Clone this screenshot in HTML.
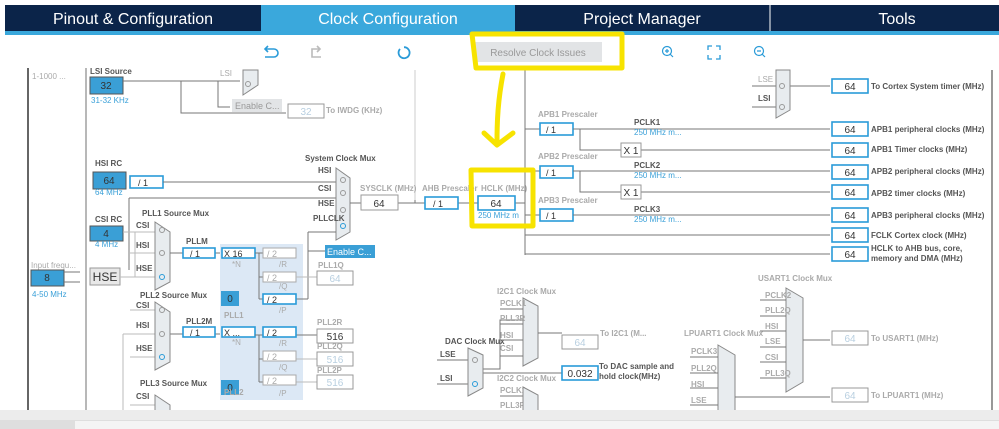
<!DOCTYPE html>
<html><head><meta charset="utf-8"><style>
html,body{margin:0;padding:0;width:999px;height:429px;overflow:hidden;background:#fff}
svg{display:block;font-family:"Liberation Sans",Arial,sans-serif}
.t{font-size:8px;fill:#555;font-weight:bold}
.g{font-size:8px;fill:#aaa}
.b{font-size:8px;fill:#3aa0d8}
.lab{font-size:8px;fill:#555;font-weight:bold}
.ln{stroke:#777;stroke-width:1;fill:none}
.lg{stroke:#bbb;stroke-width:1;fill:none}
.sel{fill:#fff;stroke:#2a9bd8;stroke-width:1.6}
.selg{fill:#fff;stroke:#aaa;stroke-width:1}
.box{fill:#fff;stroke:#2a9bd8;stroke-width:1.6}
.boxg{fill:#fff;stroke:#999;stroke-width:1}
.mux{fill:#e8ecef;stroke:#888;stroke-width:1}
.v{font-size:10px;fill:#333;text-anchor:middle}
.vg{font-size:10px;fill:#b8cfe0;text-anchor:middle}
</style></head><body>
<svg width="999" height="429" viewBox="0 0 999 429">
<defs>
<marker id="a" markerWidth="6" markerHeight="6" refX="5" refY="3" orient="auto"><path d="M0,0 L6,3 L0,6z" fill="#555"/></marker>
</defs>
<!-- tabs -->
<rect x="5" y="5" width="994" height="26" fill="#0b2449"/>
<rect x="261" y="5" width="254" height="26" fill="#3aa8dc"/>
<rect x="5" y="31" width="994" height="4" fill="#3aa8dc"/>
<line x1="770" y1="5" x2="770" y2="31" stroke="#fff" stroke-width="1"/>
<g font-size="16" fill="#fff" text-anchor="middle">
<text x="133" y="24">Pinout &amp; Configuration</text>
<text x="388" y="24">Clock Configuration</text>
<text x="642" y="24">Project Manager</text>
<text x="897" y="24">Tools</text>
</g>
<!-- toolbar icons -->
<g fill="none" stroke-width="1.6">
<path d="M266,49 h8 a4,4 0 0 1 0,8 h-9 M268,46 l-3,3 3,3" stroke="#2a9bd8"/>
<path d="M320,49 h-8 v8 h9 M317,46 l3,3 -3,3" stroke="#bbb"/>
<path d="M400,49 a5.5,5.5 0 1 0 4,-1.8" stroke="#2a9bd8" stroke-width="1.8"/>
<circle cx="667" cy="51" r="4.5" stroke="#2a9bd8" stroke-width="1.2"/><path d="M670,54 l3,3 M665,51 h4 M667,49 v4" stroke="#2a9bd8" stroke-width="1.2"/>
<path d="M708,50 v-4 h4 M716,46 h4 v4 M720,55 v4 h-4 M712,59 h-4 v-4" stroke="#2a9bd8" stroke-width="1.3"/>
<circle cx="759" cy="51" r="4.5" stroke="#2a9bd8" stroke-width="1.2"/><path d="M762,54 l3,3 M757,51 h4" stroke="#2a9bd8" stroke-width="1.2"/>
</g>
<rect x="475" y="42" width="127" height="20" fill="#e2e4e6"/>
<text x="538" y="56" font-size="10" fill="#999" text-anchor="middle">Resolve Clock Issues</text>
<!-- frame lines -->
<line x1="28" y1="68" x2="28" y2="410" stroke="#333" stroke-width="1.5"/>
<line x1="86" y1="68" x2="86" y2="410" stroke="#888" stroke-width="1.2"/>
<line x1="992" y1="70" x2="992" y2="410" stroke="#555" stroke-width="1.2"/>
<text x="32" y="79" class="g">1-1000 ...</text>
<!-- LSI -->
<text x="90" y="74" class="t">LSI Source</text>
<rect x="90" y="77" width="33" height="17" fill="#3a9fd6" stroke="#555"/>
<text x="106" y="89" class="v">32</text>
<text x="91" y="103" class="b">31-32 KHz</text>
<path d="M123,81 H240 M181,81 V113 H286 M218,81 V107 H230" class="ln"/>
<text x="220" y="76" class="g">LSI</text>
<polygon points="243,70 258,70 258,85 243,95" class="mux"/>
<circle cx="248" cy="84" r="2.5" fill="none" stroke="#999"/>
<rect x="232" y="99" width="50" height="13" fill="#e2e4e6"/>
<text x="235" y="109" font-size="9" fill="#999">Enable C...</text>
<rect x="288" y="104" width="36" height="14" class="boxg"/>
<text x="306" y="115" class="vg">32</text>
<text x="326" y="113" class="g" font-weight="bold">To IWDG (KHz)</text>
<line x1="415" y1="70" x2="415" y2="203" stroke="#ccc"/>
<!-- HSI -->
<text x="95" y="166" class="t">HSI RC</text>
<rect x="93" y="172" width="33" height="17" fill="#3a9fd6" stroke="#555"/>
<text x="109" y="184" class="v">64</text>
<text x="95" y="195" class="b">64 MHz</text>
<rect x="130" y="176" width="33" height="12" class="sel"/><text x="138" y="186" font-size="9" fill="#333">/ 1</text>
<path d="M163,182 H336 M129,198 H336 M129,198 V270" class="ln"/>
<text x="305" y="161" class="t">System Clock Mux</text>
<polygon points="336,168 350,178 350,232 336,240" class="mux"/>
<g class="lab"><text x="318" y="173">HSI</text><text x="318" y="191">CSI</text><text x="318" y="206">HSE</text><text x="313" y="221">PLLCLK</text></g>
<g fill="none" stroke="#999"><circle cx="343" cy="180" r="2.5"/><circle cx="343" cy="193" r="2.5"/><circle cx="343" cy="210" r="2.5"/><circle cx="343" cy="226" r="2.5" stroke="#2a9bd8"/></g>
<path d="M350,203 H361 M398,203 H425 M415,203 V200 M458,203 H478 M515,203 H525" class="ln"/>
<text x="360" y="191" class="g" font-weight="bold">SYSCLK (MHz)</text>
<rect x="361" y="195" width="37" height="15" class="boxg"/><text x="379" y="207" class="v">64</text>
<text x="422" y="191" class="g" font-weight="bold">AHB Prescaler</text>
<rect x="425" y="197" width="33" height="12" class="sel"/><text x="433" y="207" font-size="9" fill="#333">/ 1</text>
<text x="481" y="191" class="g" font-weight="bold">HCLK (MHz)</text>
<rect x="478" y="196" width="37" height="14" class="box"/><text x="496" y="207" class="v">64</text>
<text x="478" y="218" class="b">250 MHz m</text>
<!-- right -->
<line x1="525" y1="70" x2="525" y2="255" stroke="#777"/>
<path d="M525,129 H540 M525,171 H540 M525,215 H540 M525,235 H830 M525,254 H830" class="ln"/>
<text x="538" y="117" class="g" font-weight="bold">APB1 Prescaler</text>
<text x="538" y="159" class="g" font-weight="bold">APB2 Prescaler</text>
<text x="538" y="203" class="g" font-weight="bold">APB3 Prescaler</text>
<rect x="540" y="123" width="33" height="12" class="sel"/><text x="546" y="133" font-size="9" fill="#333">/ 1</text>
<rect x="540" y="166" width="33" height="12" class="sel"/><text x="546" y="176" font-size="9" fill="#333">/ 1</text>
<rect x="540" y="209" width="33" height="12" class="sel"/><text x="546" y="219" font-size="9" fill="#333">/ 1</text>
<path d="M573,129 H830 M580,129 V150 H830 M573,171 H830 M580,171 V192 H830 M573,215 H830" class="ln"/>
<rect x="621" y="143" width="20" height="14" class="boxg"/><text x="631" y="154" class="v">X 1</text>
<rect x="621" y="185" width="20" height="14" class="boxg"/><text x="631" y="196" class="v">X 1</text>
<g class="lab"><text x="634" y="125">PCLK1</text><text x="634" y="168">PCLK2</text><text x="634" y="212">PCLK3</text></g>
<g class="b"><text x="634" y="135">250 MHz m...</text><text x="634" y="178">250 MHz m...</text><text x="634" y="222">250 MHz m...</text></g>
<text x="758" y="82" class="g">LSE</text><text x="758" y="101" class="lab">LSI</text>
<path d="M752,86 H776 M752,107 H776 M790,86 H830" class="ln"/>
<polygon points="776,70 790,70 790,110 776,118" class="mux"/>
<g fill="none" stroke="#999"><circle cx="782" cy="86" r="2.5"/><circle cx="782" cy="107" r="2.5"/></g>
<g>
<rect x="832" y="79" width="36" height="14" class="box"/><text x="850" y="90" class="v">64</text>
<rect x="832" y="122" width="36" height="14" class="box"/><text x="850" y="133" class="v">64</text>
<rect x="832" y="143" width="36" height="14" class="box"/><text x="850" y="154" class="v">64</text>
<rect x="832" y="165" width="36" height="14" class="box"/><text x="850" y="176" class="v">64</text>
<rect x="832" y="185" width="36" height="14" class="box"/><text x="850" y="196" class="v">64</text>
<rect x="832" y="208" width="36" height="14" class="box"/><text x="850" y="219" class="v">64</text>
<rect x="832" y="228" width="36" height="14" class="box"/><text x="850" y="239" class="v">64</text>
<rect x="832" y="247" width="36" height="14" class="box"/><text x="850" y="258" class="v">64</text>
</g>
<g class="lab">
<text x="871" y="89">To Cortex System timer (MHz)</text>
<text x="871" y="132">APB1 peripheral clocks (MHz)</text>
<text x="871" y="152">APB1 Timer clocks (MHz)</text>
<text x="871" y="174">APB2 peripheral clocks (MHz)</text>
<text x="871" y="196">APB2 timer clocks (MHz)</text>
<text x="871" y="218">APB3 peripheral clocks (MHz)</text>
<text x="871" y="238">FCLK Cortex clock (MHz)</text>
<text x="871" y="251">HCLK to AHB bus, core,</text>
<text x="871" y="261">memory and DMA (MHz)</text>
</g>
<!-- input / CSI / HSE -->
<text x="31" y="268" class="g">Input frequ...</text>
<rect x="31" y="270" width="33" height="16" fill="#3a9fd6" stroke="#555"/><text x="47" y="281" class="v">8</text>
<text x="32" y="297" class="b">4-50 MHz</text>
<path d="M64,272 H80 M64,282 H80" class="ln"/>
<text x="95" y="222" class="t">CSI RC</text>
<rect x="90" y="226" width="33" height="15" fill="#3a9fd6" stroke="#555"/><text x="106" y="237" class="v">4</text>
<text x="95" y="247" class="b">4 MHz</text>
<rect x="90" y="268" width="30" height="17" fill="#e8e8e8" stroke="#999"/><text x="105" y="281" font-size="12" fill="#333" text-anchor="middle">HSE</text>
<path d="M123,232 H155 M129,253 H155 M120,277 H155 M135,232 V277 M123,334 V410 M123,334 H155 M130,310 H155 M130,357 H155 M130,405 H155" class="lg"/>
<text x="142" y="216" class="t">PLL1 Source Mux</text>
<polygon points="155,222 170,232 170,282 155,290" class="mux"/>
<g class="lab"><text x="136" y="228">CSI</text><text x="136" y="248">HSI</text><text x="136" y="271">HSE</text></g>
<g fill="none" stroke="#999"><circle cx="162" cy="230" r="2.5"/><circle cx="162" cy="253" r="2.5"/><circle cx="162" cy="277" r="2.5" stroke="#2a9bd8"/></g>
<path d="M170,253 H183 M215,253 H222 M170,334 H183 M215,334 H222" class="ln"/>
<text x="186" y="244" class="t" fill="#666">PLLM</text>
<rect x="183" y="248" width="32" height="10" class="sel"/><text x="190" y="257" font-size="9" fill="#333">/ 1</text>
<rect x="220" y="244" width="83" height="156" fill="#dce8f5"/>
<rect x="222" y="248" width="33" height="10" class="sel"/><text x="224" y="257" font-size="9" fill="#333">X 16</text>
<text x="232" y="267" class="g">*N</text>
<path d="M255,253 H263 M259,253 V299 M259,277 H263 M259,299 H263 M296,299 H308 M308,299 V232 M308,232 H336 M308,251 H325" class="ln"/>
<rect x="263" y="248" width="33" height="10" class="selg"/><text x="267" y="257" font-size="9" fill="#aaa">/ 2</text>
<rect x="263" y="272" width="33" height="10" class="selg"/><text x="267" y="281" font-size="9" fill="#aaa">/ 2</text>
<rect x="263" y="294" width="33" height="10" class="sel"/><text x="267" y="303" font-size="9" fill="#333">/ 2</text>
<g class="g"><text x="279" y="267">/R</text><text x="279" y="289">/Q</text><text x="279" y="313">/P</text></g>
<rect x="221" y="291" width="18" height="15" fill="#3a9fd6"/><text x="230" y="302" class="v">0</text>
<text x="224" y="318" class="g" font-weight="bold">PLL1</text>
<rect x="325" y="245" width="50" height="13" fill="#3a9fd6"/>
<text x="327" y="255" font-size="9" fill="#fff">Enable C...</text>
<path d="M296,277 H317" class="lg"/>
<text x="318" y="268" class="g" font-weight="bold">PLL1Q</text>
<rect x="317" y="271" width="36" height="14" class="boxg"/><text x="335" y="282" class="vg">64</text>
<text x="140" y="298" class="t">PLL2 Source Mux</text>
<polygon points="155,302 170,312 170,362 155,370" class="mux"/>
<g class="lab"><text x="136" y="308">CSI</text><text x="136" y="328">HSI</text><text x="136" y="351">HSE</text></g>
<g fill="none" stroke="#999"><circle cx="162" cy="310" r="2.5"/><circle cx="162" cy="334" r="2.5"/><circle cx="162" cy="357" r="2.5" stroke="#2a9bd8"/></g>
<text x="186" y="324" class="t" fill="#666">PLL2M</text>
<rect x="183" y="327" width="32" height="10" class="sel"/><text x="190" y="336" font-size="9" fill="#333">/ 1</text>
<rect x="222" y="327" width="33" height="10" class="sel"/><text x="224" y="336" font-size="9" fill="#333">X ...</text>
<text x="232" y="345" class="g">*N</text>
<path d="M255,335 H263 M259,335 V382 M259,359 H263 M259,382 H263 M296,335 H317" class="ln"/>
<path d="M296,359 H317 M296,382 H317" class="lg"/>
<rect x="263" y="327" width="33" height="10" class="sel"/><text x="267" y="336" font-size="9" fill="#333">/ 2</text>
<rect x="263" y="351" width="33" height="10" class="selg"/><text x="267" y="360" font-size="9" fill="#aaa">/ 2</text>
<rect x="263" y="375" width="33" height="10" class="selg"/><text x="267" y="384" font-size="9" fill="#aaa">/ 2</text>
<g class="g"><text x="279" y="346">/R</text><text x="279" y="370">/Q</text><text x="279" y="396">/P</text></g>
<rect x="221" y="380" width="18" height="15" fill="#3a9fd6"/><text x="230" y="391" class="v">0</text>
<text x="224" y="395" class="g" font-weight="bold">PLL2</text>
<text x="317" y="325" class="g" font-weight="bold">PLL2R</text>
<rect x="317" y="329" width="36" height="14" class="boxg"/><text x="335" y="340" class="v">516</text>
<text x="317" y="349" class="g" font-weight="bold">PLL2Q</text>
<rect x="317" y="352" width="36" height="14" class="boxg"/><text x="335" y="363" class="vg">516</text>
<text x="317" y="373" class="g" font-weight="bold">PLL2P</text>
<rect x="317" y="375" width="36" height="14" class="boxg"/><text x="335" y="386" class="vg">516</text>
<text x="140" y="386" class="t">PLL3 Source Mux</text>
<text x="136" y="399" class="lab">CSI</text>
<polygon points="155,395 170,405 170,412 155,412" class="mux"/>
<!-- DAC / I2C -->
<text x="445" y="344" class="t">DAC Clock Mux</text>
<g class="lab"><text x="440" y="357">LSE</text><text x="440" y="381">LSI</text></g>
<path d="M437,360 H468 M437,384 H468 M483,369 H500 V320 H523 M483,373 H562" class="ln"/>
<polygon points="468,348 483,355 483,388 468,396" class="mux"/>
<g fill="none" stroke="#999"><circle cx="475" cy="360" r="2.5"/><circle cx="475" cy="384" r="2.5" stroke="#2a9bd8"/></g>
<text x="497" y="294" class="g" font-weight="bold">I2C1 Clock Mux</text>
<polygon points="523,298 538,306 538,358 523,366" class="mux"/>
<g class="g" font-weight="bold"><text x="500" y="306">PCLK1</text><text x="500" y="321">PLL3R</text><text x="500" y="338">HSI</text><text x="500" y="351">CSI</text><text x="497" y="381">I2C2 Clock Mux</text><text x="500" y="393">PCLK1</text><text x="500" y="408">PLL3R</text></g>
<path d="M500,309 H523 M500,324 H523 M500,340 H523 M500,356 H523 M538,333 H562 M500,396 H523" class="ln"/>
<polygon points="523,387 538,395 538,412 523,412" class="mux"/>
<rect x="562" y="335" width="36" height="14" class="boxg"/><text x="580" y="346" class="vg">64</text>
<text x="600" y="336" class="g" font-weight="bold">To I2C1 (M...</text>
<rect x="562" y="366" width="36" height="14" class="box"/><text x="580" y="377" class="v">0.032</text>
<text x="599" y="369" class="lab">To DAC sample and</text><text x="599" y="379" class="lab">hold clock(MHz)</text>
<!-- LPUART / USART -->
<text x="684" y="336" class="g" font-weight="bold">LPUART1 Clock Mux</text>
<polygon points="718,345 735,355 735,412 718,412" class="mux"/>
<g class="g" font-weight="bold"><text x="691" y="354">PCLK3</text><text x="691" y="371">PLL2Q</text><text x="691" y="387">HSI</text><text x="691" y="403">LSE</text></g>
<path d="M690,357 H718 M690,373 H718 M690,388 H718 M690,405 H718 M735,397 H830" class="ln"/>
<text x="758" y="281" class="g" font-weight="bold">USART1 Clock Mux</text>
<polygon points="786,288 803,298 803,382 786,392" class="mux"/>
<g class="g" font-weight="bold"><text x="765" y="298">PCLK2</text><text x="765" y="313">PLL2Q</text><text x="765" y="329">HSI</text><text x="765" y="344">LSE</text><text x="765" y="360">CSI</text><text x="765" y="376">PLL3Q</text></g>
<path d="M760,300 H786 M760,316 H786 M760,331 H786 M760,347 H786 M760,362 H786 M760,378 H786 M803,340 H830" class="ln"/>
<rect x="832" y="331" width="36" height="14" class="boxg"/><text x="850" y="342" class="vg">64</text>
<text x="871" y="341" class="g" font-weight="bold">To USART1 (MHz)</text>
<rect x="832" y="388" width="36" height="14" class="boxg"/><text x="850" y="399" class="vg">64</text>
<text x="871" y="398" class="g" font-weight="bold">To LPUART1 (MHz)</text>
<!-- yellow annotations -->
<g fill="none" stroke="#f7e300" stroke-width="5" stroke-linecap="round" stroke-linejoin="round">
<path d="M472,34 H622 V68 H476 Z"/>
<path d="M503,74 C498,100 497,120 497,142 M484,133 L497,145 L513,133"/>
<path d="M471,170 H533 V226 H472 Z"/>
</g>
<!-- bottom -->
<rect x="0" y="410" width="999" height="10" fill="#ececec"/>
<rect x="0" y="420" width="999" height="9" fill="#dedede"/>
<rect x="75" y="421" width="924" height="8" fill="#f4f4f4"/>
</svg>
</body></html>
